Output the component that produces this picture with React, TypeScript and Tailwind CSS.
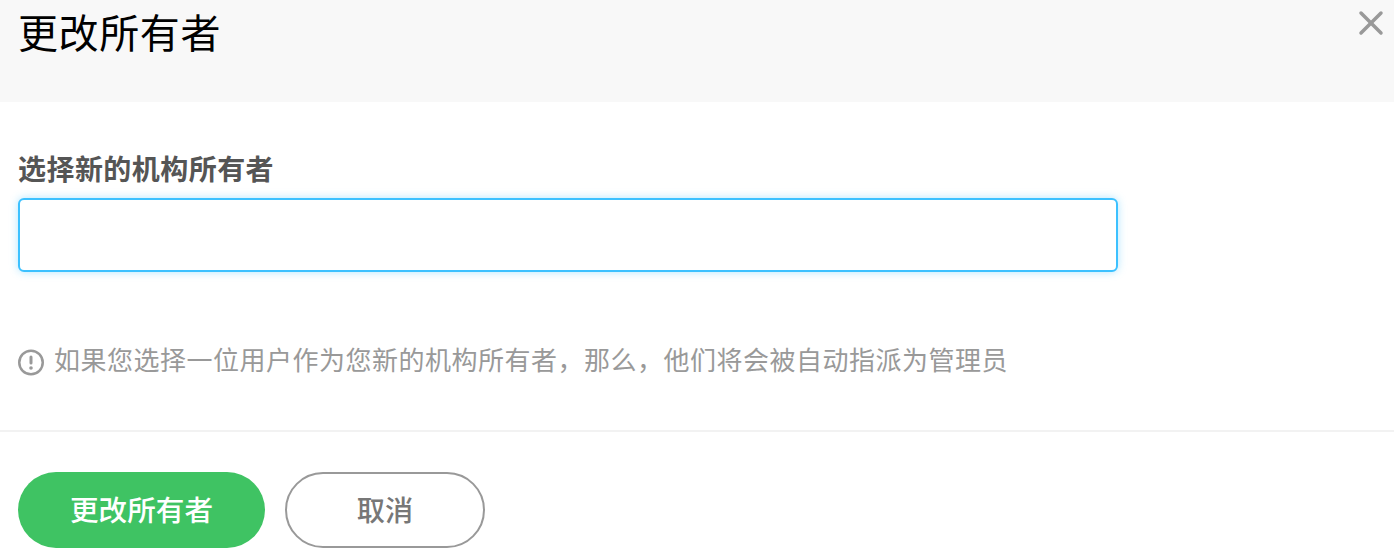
import { X } from "lucide-react";

const fontStack = "font-['Liberation_Sans','Noto_Sans_CJK_SC',sans-serif]";

export default function App() {
  return (
    <div className={`h-[560px] w-[1394px] overflow-hidden bg-white ${fontStack}`}>
      {/* Header */}
      <div className="relative h-[102px] bg-[#f8f8f8] pl-[18px] pt-[5px]">
        <h1 className="text-[40px] leading-[58px] font-normal tracking-[0.6px] text-black">更改所有者</h1>
        <button className="absolute right-[3px] top-[3px] text-[#999999]">
          <X size={40} strokeWidth={2.1} />
        </button>
      </div>

      {/* Body */}
      <div className="h-[328px] px-[18px] pt-[49px]">
        <label className="block text-[28px] leading-[40px] font-bold tracking-[0.45px] text-[#555555]">
          选择新的机构所有者
        </label>
        <input className="mt-[7px] block h-[74px] w-[1100px] rounded-[6px] border-2 border-[#3cc1ff] bg-white shadow-[0_0_8px_rgba(60,193,255,0.4)] outline-none" />
        <div className="mt-[69px] flex items-center gap-[9px] text-[#999999]">
          <svg width="27" height="27" viewBox="0 0 27 27" fill="none" className="mt-[3px] shrink-0">
            <circle cx="13" cy="13.5" r="11.75" stroke="currentColor" strokeWidth="2.5" />
            <rect x="11.5" y="6.5" width="3" height="9" rx="1.5" fill="currentColor" />
            <circle cx="13" cy="19" r="1.8" fill="currentColor" />
          </svg>
          <p className="text-[26px] leading-[40px] tracking-[0.5px]">
            如果您选择一位用户作为您新的机构所有者，那么，他们将会被自动指派为管理员
          </p>
        </div>
      </div>

      {/* Footer */}
      <div className="flex gap-[20px] border-t-2 border-[#f2f2f2] px-[18px] pt-[40px]">
        <button className="h-[76px] w-[247px] rounded-full bg-[#3fc363] pt-[2px] text-[28.6px] font-medium text-white">
          更改所有者
        </button>
        <button className="h-[76px] w-[200px] rounded-full border-2 border-[#999999] bg-white pt-[2px] text-[28.2px] font-medium text-[#777777]">
          取消
        </button>
      </div>
    </div>
  );
}
